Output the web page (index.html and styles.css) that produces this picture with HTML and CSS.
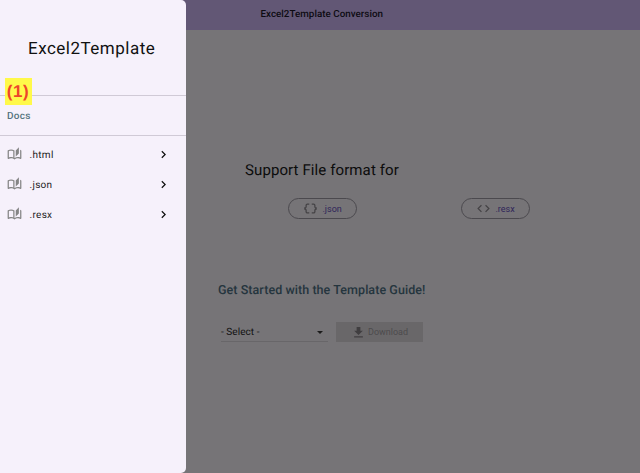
FILE: index.html
```html
<!DOCTYPE html>
<html lang="en">
<head>
<meta charset="utf-8">
<title>Excel2Template Conversion</title>
<link rel="stylesheet" href="styles.css">
</head>
<body>
<svg class="defs" width="0" height="0" aria-hidden="true">
  <symbol id="book" viewBox="0 0 24 24"><path d="M22.470 5.200C22 4.960 21.510 4.760 21 4.590v12.030C19.860 16.210 18.690 16 17.500 16c-1.900 0-3.780.54-5.500 1.580V5.480C10.380 4.550 8.510 4 6.500 4 4.710 4 3.020 4.440 1.530 5.200 1.200 5.360 1 5.710 1 6.080v12.080c0 .58.47.99 1 .99.16 0 .32-.04.48-.12C3.690 18.400 5.050 18 6.500 18c2.070 0 3.980.82 5.500 2 1.520-1.180 3.430-2 5.500-2 1.450 0 2.810.4 4.020 1.040.16.08.32.12.48.12.52 0 1-.41 1-.99V6.080c0-.37-.2-.72-.53-.88zM10 16.620C8.860 16.210 7.690 16 6.500 16c-1.190 0-2.360.21-3.500.62V6.710C4.110 6.240 5.280 6 6.500 6c1.220 0 2.390.24 3.500.71v9.910zM19 .5l-5 5V15l5-4.500V.5z"/></symbol>
  <symbol id="chevron" viewBox="0 0 24 24"><path d="M10 6L8.590 7.410 13.170 12l-4.580 4.590L10 18l6-6z"/></symbol>
  <symbol id="braces" viewBox="0 0 24 24"><path d="M4 7v2c0 .55-.45 1-1 1H2v4h1c.55 0 1 .45 1 1v2c0 1.650 1.350 3 3 3h3v-2H7c-.55 0-1-.45-1-1v-2c0-1.300-.84-2.420-2-2.830v-.34C5.160 11.420 6 10.300 6 9V7c0-.55.45-1 1-1h3V4H7C5.350 4 4 5.350 4 7z"/><path d="M21 10c-.55 0-1-.45-1-1V7c0-1.650-1.350-3-3-3h-3v2h3c.55 0 1 .45 1 1v2c0 1.300.84 2.420 2 2.830v.34c-1.160.41-2 1.520-2 2.830v2c0 .55-.45 1-1 1h-3v2h3c1.650 0 3-1.350 3-3v-2c0-.55.45-1 1-1h1v-4h-1z"/></symbol>
  <symbol id="code" viewBox="0 0 24 24"><path d="M9.400 16.600L4.800 12l4.600-4.600L8 6l-6 6 6 6 1.400-1.400zm5.200 0l4.600-4.600-4.600-4.600L16 6l6 6-6 6-1.400-1.400z"/></symbol>
  <symbol id="download" viewBox="0 0 24 24"><path d="M19 9h-4V3H9v6H5l7 7 7-7zM5 18v2h14v-2H5z"/></symbol>
</svg>

<header class="topbar"><h1>Excel2Template Conversion</h1></header>
<main class="content">
  <h2 class="formats-title">Support File format for</h2>
  <div class="formats">
    <button class="chip"><svg><use href="#braces"/></svg>.json</button>
    <button class="chip"><svg><use href="#code"/></svg>.resx</button>
  </div>
  <h3 class="guide-title">Get Started with the Template Guide!</h3>
  <div class="guide">
    <div class="select"><span>- Select -</span><i class="caret"></i></div>
    <button class="download" disabled><svg><use href="#download"/></svg>Download</button>
  </div>
</main>

<nav class="drawer">
  <div class="brand">Excel2Template<span class="marker">(1)</span></div>
  <div class="section">Docs</div>
  <ul class="docs">
    <li><svg class="book"><use href="#book"/></svg><span>.html</span><svg class="chev"><use href="#chevron"/></svg></li>
    <li><svg class="book"><use href="#book"/></svg><span>.json</span><svg class="chev"><use href="#chevron"/></svg></li>
    <li><svg class="book"><use href="#book"/></svg><span>.resx</span><svg class="chev"><use href="#chevron"/></svg></li>
  </ul>
</nav>
</body>
</html>
```
FILE: styles.css
```css
* { box-sizing: border-box; }
body {
  margin: 0;
  height: 473px;
  position: relative;
  overflow: hidden;
  background: #767477;
  font-family: Roboto, "Liberation Sans", sans-serif;
  color: #111;
  text-rendering: geometricPrecision;
}
h1, h2, h3, ul { margin: 0; padding: 0; }
svg { fill: currentColor; flex: none; }
button { font: inherit; }
.defs { position: absolute; }

.topbar {
  height: 30px;
  padding-left: 260.5px;
  background: #625775;
}
.topbar h1 {
  font-size: 9.8px;
  line-height: 29px;
  font-weight: 500;
  letter-spacing: 0.03px;
  color: #0d0b12;
}

.content { padding: 129px 0 0 218px; }
.formats-title {
  margin-left: 27px;
  font-size: 15px;
  line-height: 22px;
  font-weight: 400;
  letter-spacing: 0.1px;
  color: #0c0c0c;
}
.formats {
  display: flex;
  gap: 104px;
  margin: 17px 0 0 70px;
}
.chip {
  display: flex;
  align-items: center;
  width: 69px;
  height: 21px;
  padding: 0 0 0 14px;
  gap: 4.5px;
  border: 1px solid #4b494e;
  border-radius: 11px;
  background: none;
  color: #2f2559;
  font-size: 9px;
}
.chip svg { width: 15px; height: 15px; color: #444245; }

.guide-title {
  margin-top: 62px;
  font-size: 12.5px;
  line-height: 20px;
  font-weight: 500;
  letter-spacing: 0.06px;
  color: #25353e;
}
.guide {
  display: flex;
  gap: 8px;
  margin: 21px 0 0 3px;
}
.select {
  display: flex;
  align-items: center;
  justify-content: space-between;
  width: 107px;
  height: 20px;
  padding: 1px 5px 0 0;
  border-bottom: 1px solid #686669;
  font-size: 10px;
  letter-spacing: 0.05px;
}
.caret {
  border: 3px solid transparent;
  border-top-color: #1b1b1b;
  border-bottom: 0;
}
.download {
  display: flex;
  align-items: center;
  width: 87px;
  height: 20px;
  padding: 0 0 0 15px;
  gap: 2px;
  border: 0;
  background: #696769;
  color: #4d4b4d;
  font-size: 9px;
}
.download svg { width: 15px; height: 15px; color: #403e40; }

.drawer {
  position: absolute;
  inset: 0 auto 0 0;
  width: 186px;
  border-radius: 0 5px 5px 0;
  background: #f6f1fb;
}
.brand {
  position: relative;
  height: 96px;
  padding-left: 28px;
  border-bottom: 1px solid #d0cad6;
  font-size: 17px;
  line-height: 98px;
  letter-spacing: 0.5px;
}
.marker {
  position: absolute;
  left: 5px;
  top: 78px;
  width: 27px;
  height: 27px;
  background: #fff94a;
  color: #ee452a;
  font: bold 17px/28px "Liberation Sans", sans-serif;
  text-indent: -1px;
  text-align: center;
}
.section {
  height: 40px;
  padding-left: 7px;
  border-bottom: 1px solid #d0cad6;
  font-size: 10px;
  line-height: 41px;
  font-weight: 500;
  letter-spacing: 0.3px;
  color: #54737e;
}
.docs { padding-top: 4px; list-style: none; }
.docs li {
  display: flex;
  align-items: center;
  height: 29.8px;
  padding: 0 15px 0 7px;
  font-size: 10px;
  letter-spacing: 0.3px;
  color: #222;
}
.docs span { flex: 1; margin-left: 7.5px; padding-top: 2px; }
.book { width: 15px; height: 15px; color: #858585; }
.chev { width: 15px; height: 15px; color: #111; }
```
